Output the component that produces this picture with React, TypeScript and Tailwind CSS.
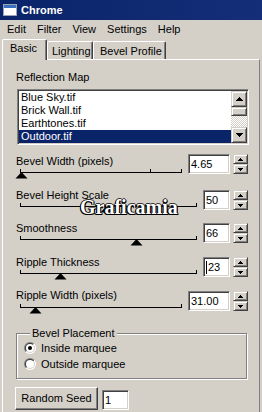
import React from "react";

const raised =
  "border border-t-white border-l-white border-r-[#404040] border-b-[#404040] shadow-[inset_-1px_-1px_0_#808080]";
const raisedScroll =
  "border border-t-[#d4d0c8] border-l-[#d4d0c8] border-r-[#404040] border-b-[#404040] shadow-[inset_1px_1px_0_#fff,inset_-1px_-1px_0_#808080]";
const sunken =
  "border border-t-[#808080] border-l-[#808080] border-r-white border-b-white shadow-[inset_1px_1px_0_#404040,inset_-1px_-1px_0_#d4d0c8]";

function Arrow({ up, w, h }: { up: boolean; w: number; h: number }) {
  const pts = up ? `${w / 2},0 ${w},${h} 0,${h}` : `0,0 ${w},0 ${w / 2},${h}`;
  return (
    <svg width={w} height={h} viewBox={`0 0 ${w} ${h}`} shapeRendering="crispEdges">
      <polygon points={pts} fill="#000" />
    </svg>
  );
}

function Spin() {
  return (
    <div className="flex flex-col w-[15px]">
      <div className={`h-[10px] flex items-center justify-center bg-[#d4d0c8] ${raisedScroll}`}>
        <Arrow up w={5} h={3} />
      </div>
      <div className={`h-[10px] flex items-center justify-center bg-[#d4d0c8] ${raisedScroll}`}>
        <Arrow up={false} w={5} h={3} />
      </div>
    </div>
  );
}

type RowProps = {
  label: string;
  value: string;
  wide?: boolean;
  thumb: number;
  mid?: number;
  rowCls: string;
  inputCls: string;
  sliderCls: string;
  caret?: boolean;
};

function SliderRow(p: RowProps) {
  return (
    <div className={`flex items-start ${p.rowCls}`}>
      <div className="flex flex-col">
        <div className="h-[13px] whitespace-nowrap">{p.label}</div>
        <div
          className={`relative ml-[4px] h-[11px] ${p.wide ? "w-[162px]" : "w-[177px]"} ${p.sliderCls}`}
        >
          <div className="h-[4px] border-x border-b border-black" />
          {p.mid !== undefined && (
            <div className="absolute top-0 h-[4px] w-px bg-black" style={{ left: p.mid - 20 }} />
          )}
          <svg
            className="absolute top-[3px]"
            style={{ left: p.thumb - 20 - 6 }}
            width="13"
            height="7"
            viewBox="0 0 13 7"
          >
            <polygon points="6.5,0 12.5,6.5 0.5,6.5" fill="#000" />
          </svg>
        </div>
      </div>
      <div className={`ml-auto flex gap-[3px] ${p.inputCls}`}>
        <div
          className={`${p.wide ? "w-[42px]" : "w-[27px]"} h-[20px] bg-white ${sunken} flex items-center pl-[2px]`}
        >
          {p.caret && <div className="w-px h-[13px] bg-black mr-px" />}
          <span>{p.value}</span>
        </div>
        <Spin />
      </div>
    </div>
  );
}

function Radio({ checked }: { checked: boolean }) {
  return (
    <svg width="12" height="12" viewBox="0 0 12 12">
      <defs>
        <linearGradient id="ro" x1="0" y1="0" x2="1" y2="1">
          <stop offset="0.5" stopColor="#808080" />
          <stop offset="0.5" stopColor="#ffffff" />
        </linearGradient>
        <linearGradient id="ri" x1="0" y1="0" x2="1" y2="1">
          <stop offset="0.5" stopColor="#404040" />
          <stop offset="0.5" stopColor="#d4d0c8" />
        </linearGradient>
      </defs>
      <circle cx="6" cy="6" r="6" fill="url(#ro)" />
      <circle cx="6" cy="6" r="5" fill="url(#ri)" />
      <circle cx="6" cy="6" r="4" fill="#fff" />
      {checked && <circle cx="6" cy="6" r="2" fill="#000" />}
    </svg>
  );
}

export default function App() {
  const items = ["Blue Sky.tif", "Brick Wall.tif", "Earthtones.tif", "Outdoor.tif"];
  return (
    <div className="relative w-[262px] h-[412px] overflow-hidden bg-[#d4d0c8] flex flex-col font-['Liberation_Sans',Arial,sans-serif] text-[11px] leading-[13px] text-black">
      {/* Title bar */}
      <div className="h-[20px] shrink-0 flex items-center pl-[3px] bg-gradient-to-r from-[#0a246a] to-[#142f78]">
        <svg width="14" height="12" viewBox="0 0 14 12" shapeRendering="crispEdges">
          <rect x="0.5" y="0.5" width="13" height="11" fill="#fff" stroke="#9aa4b8" />
          <rect x="1" y="1" width="12" height="3" fill="#3a6ec0" />
        </svg>
        <span className="ml-[4px] font-bold text-white">Chrome</span>
      </div>

      {/* Menu bar */}
      <div className="h-[18px] shrink-0 flex items-center pl-[7px] gap-[11px]">
        <span>Edit</span>
        <span>Filter</span>
        <span>View</span>
        <span>Settings</span>
        <span>Help</span>
      </div>

      {/* Tabs */}
      <div className="h-[21px] shrink-0 flex items-end pl-[2px]">
        <div className="relative z-10 mb-[-1px] h-[21px] w-[45px] bg-[#d4d0c8] border-t border-l border-white border-r border-r-[#404040] shadow-[inset_-1px_0_0_#808080] rounded-tl-[2px] rounded-tr-[2px] pt-[2px] pl-[7px]">
          Basic
        </div>
        <div className="h-[18px] w-[46px] border-t border-l border-white border-r border-r-[#404040] shadow-[inset_-1px_0_0_#808080] rounded-tl-[2px] rounded-tr-[2px] pt-[3px] pl-[4px]">
          Lighting
        </div>
        <div className="h-[18px] w-[73px] border-t border-l border-white border-r border-r-[#404040] shadow-[inset_-1px_0_0_#808080] rounded-tl-[2px] rounded-tr-[2px] pt-[3px] pl-[6px]">
          Bevel Profile
        </div>
      </div>

      {/* Panel */}
      <div className="flex-1 ml-[2px] mr-[2px] flex flex-col border-t border-l border-white border-r border-r-[#808080] pl-[13px] pr-[11px]">
        <div className="mt-[11px] h-[13px]">Reflection Map</div>

        <div className={`mt-[5px] ml-[1px] mr-[-1px] h-[56px] p-px flex bg-white ${sunken}`}>
          <div className="flex-1 flex flex-col">
            {items.map((it, i) => (
              <div
                key={it}
                className={`h-[13px] pl-[2px] ${i === 3 ? "bg-[#0a246a] text-white" : ""}`}
              >
                {it}
              </div>
            ))}
          </div>
          <div className="w-[16px] flex flex-col">
            <div className={`h-[16px] flex items-center justify-center bg-[#d4d0c8] ${raisedScroll}`}>
              <Arrow up w={7} h={4} />
            </div>
            <div className={`h-[9px] bg-[#d4d0c8] ${raisedScroll}`} />
            <div className="flex-1 bg-[repeating-conic-gradient(#ffffff_0%_25%,#d4d0c8_0%_50%)] bg-[length:2px_2px]" />
            <div className={`h-[16px] flex items-center justify-center bg-[#d4d0c8] ${raisedScroll}`}>
              <Arrow up={false} w={7} h={4} />
            </div>
          </div>
        </div>

        <SliderRow
          label="Bevel Width (pixels)"
          value="4.65"
          wide
          thumb={21}
          mid={150}
          rowCls="mt-[10px] h-[34px]"
          inputCls="mt-[-1px]"
          sliderCls="mt-[1px]"
        />
        <SliderRow
          label="Bevel Height Scale"
          value="50"
          thumb={106}
          rowCls="h-[33px]"
          inputCls="mt-[1px]"
          sliderCls="mt-[1px]"
        />
        <SliderRow
          label="Smoothness"
          value="66"
          thumb={136}
          rowCls="h-[34px]"
          inputCls="mt-[1px]"
          sliderCls="mt-[1px]"
        />
        <SliderRow
          label="Ripple Thickness"
          value="23"
          caret
          thumb={60}
          rowCls="h-[33px]"
          inputCls="mt-[1px]"
          sliderCls="mt-[1px]"
        />
        <SliderRow
          label="Ripple Width (pixels)"
          value="31.00"
          wide
          thumb={35}
          rowCls="h-[38px]"
          inputCls="mt-[2px]"
          sliderCls="mt-[2px]"
        />

        <fieldset className="border border-[#808080] shadow-[1px_1px_0_#fff,inset_1px_1px_0_#fff] pl-[7px] pb-[6px] mr-[1px]">
          <legend className="ml-[6px] px-[2px] bg-[#d4d0c8]">Bevel Placement</legend>
          <div className="h-[16px] flex items-center gap-[5px]">
            <Radio checked />
            <span>Inside marquee</span>
          </div>
          <div className="h-[16px] flex items-center gap-[5px]">
            <Radio checked={false} />
            <span>Outside marquee</span>
          </div>
        </fieldset>

        <div className="mt-[8px] ml-[-1px] flex items-end gap-[4px]">
          <div className={`h-[23px] w-[83px] flex items-center justify-center bg-[#d4d0c8] ${raised}`}>
            Random Seed
          </div>
          <div className={`h-[20px] w-[27px] bg-white flex items-center pl-[2px] ${sunken}`}>1</div>
        </div>
      </div>

      {/* Watermark */}
      <div className="absolute left-[80px] top-[197px] font-['Liberation_Serif',serif] font-bold text-[20px] leading-[20px] text-white [text-shadow:-1px_1px_0_#000,1px_1px_0_#000,-1px_0_0_#000,1px_0_0_#222,0_-1px_0_#333]">
        Graficamia
      </div>
    </div>
  );
}
